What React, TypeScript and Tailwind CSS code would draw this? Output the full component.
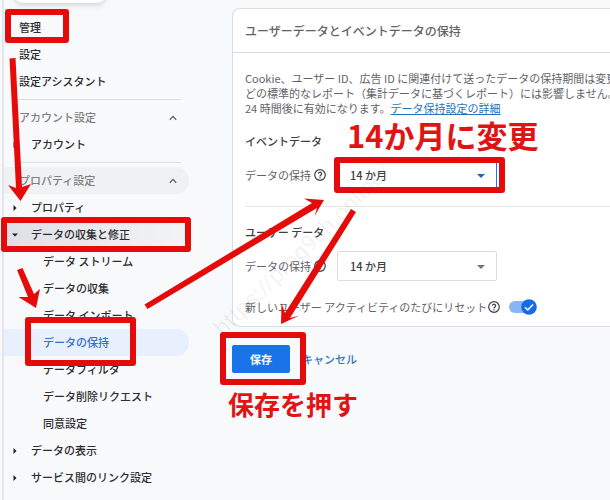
import type { ReactNode } from "react";

const LABEL = "flex h-[27px] items-center whitespace-nowrap";

function Chevron() {
  return (
    <svg className="h-2 w-2" viewBox="0 0 8 8" fill="none" stroke="#5f6368" strokeWidth="1.3" aria-hidden>
      <path d="M0.8 5.8 4 2.4l3.2 3.4" />
    </svg>
  );
}

function Caret({ open = false }: { open?: boolean }) {
  return (
    <svg className="h-2 w-2 shrink-0" viewBox="0 0 8 8" fill="#202124" aria-hidden>
      {open ? <path d="M1 2.5h6L4 5.5z" /> : <path d="M2.5 1v6L5.5 4z" />}
    </svg>
  );
}

function HelpIcon() {
  return (
    <svg className="h-3 w-3 shrink-0" viewBox="0 0 12 12" fill="none" stroke="#3c4043" strokeWidth="1.2" aria-hidden>
      <circle cx="6" cy="6" r="5.3" />
      <path d="M4.4 4.8a1.6 1.6 0 1 1 2.5 1.3c-.6.4-.9.7-.9 1.3" />
      <path d="M6 8.2v1.2" />
    </svg>
  );
}

function SectionHeading({ children, active = false }: { children: ReactNode; active?: boolean }) {
  return (
    <button
      type="button"
      className={`${LABEL} w-full justify-between rounded-r-full pl-[15px] pr-3 text-[#7b7f84] ${
        active ? "bg-[#f0f1f2]" : ""
      }`}
    >
      {children}
      <Chevron />
    </button>
  );
}

function TreeItem({ children, open = false }: { children: ReactNode; open?: boolean }) {
  return (
    <a
      href="#"
      className={`${LABEL} gap-3 pl-[7px] ${open ? "bg-linear-to-r from-[#dfe0e5] to-[#f3f4f6]" : ""}`}
    >
      <Caret open={open} />
      {children}
    </a>
  );
}

const COLLECTION_ITEMS = [
  "データ ストリーム",
  "データの収集",
  "データ インポート",
  "データの保持",
  "データフィルタ",
  "データ削除リクエスト",
  "同意設定",
];

function Sidebar() {
  return (
    <aside className="w-[187px] shrink-0 border-l-2 border-[#e3e5ea] font-medium">
      <div className="h-[14px] overflow-hidden pl-2">
        <div className="-mt-5 h-[23px] w-24 rounded-full bg-white shadow-md" />
      </div>
      <nav>
        <a href="#" className={`${LABEL} pl-[15px]`}>管理</a>
        <a href="#" className={`${LABEL} pl-[15px]`}>設定</a>
        <a href="#" className={`${LABEL} pl-[15px]`}>設定アシスタント</a>
        <hr className="my-1 ml-3 mr-2 border-[#dcdee2]" />
        <SectionHeading>アカウント設定</SectionHeading>
        <TreeItem>アカウント</TreeItem>
        <hr className="my-1 ml-3 mr-2 border-[#dcdee2]" />
        <SectionHeading active>プロパティ設定</SectionHeading>
        <TreeItem>プロパティ</TreeItem>
        <TreeItem open>データの収集と修正</TreeItem>
        {COLLECTION_ITEMS.map((item) => (
          <a
            key={item}
            href="#"
            className={`${LABEL} rounded-r-full pl-[39px] ${
              item === "データの保持" ? "bg-[#e8f0fe] text-[#3572c6]" : ""
            }`}
          >
            {item}
          </a>
        ))}
        <TreeItem>データの表示</TreeItem>
        <TreeItem>サービス間のリンク設定</TreeItem>
      </nav>
    </aside>
  );
}

function RetentionRow({ id, focused = false }: { id: string; focused?: boolean }) {
  return (
    <div className="flex h-[30px] items-center">
      <label htmlFor={id} className="w-[69px] whitespace-nowrap">データの保持</label>
      <HelpIcon />
      <div className="relative ml-[11px]">
        <select
          id={id}
          className={`h-[30px] w-[160px] appearance-none rounded-xs border bg-white pl-3 font-medium text-[#3c4043] ${
            focused ? "border-[#1a73e8]" : "border-[#dadce0]"
          }`}
        >
          <option>14 か月</option>
        </select>
        <svg
          className={`pointer-events-none absolute right-3 top-3 h-2 w-2 ${
            focused ? "text-[#1967b5]" : "text-[#70757a]"
          }`}
          viewBox="0 0 8 8"
          fill="currentColor"
          aria-hidden
        >
          <path d="M0 2h8L4 6z" />
        </svg>
      </div>
    </div>
  );
}

function SettingsCard() {
  return (
    <section className="overflow-hidden rounded-l-lg border border-r-0 border-[#dadce0] bg-white">
      <h1 className="flex h-11 items-center whitespace-nowrap border-b border-[#dadce0] pl-3 text-[12px] font-medium">
        ユーザーデータとイベントデータの保持
      </h1>
      <div className="pb-1 pl-3 pt-[18px]">
        <p className="whitespace-nowrap leading-[15px]">
          Cookie、ユーザー ID、広告 ID に関連付けて送ったデータの保持期間は変更で
          <br />
          どの標準的なレポート（集計データに基づくレポート）には影響しません。
          <br />
          24 時間後に有効になります。
          <a href="#" className="text-[#2374bb] underline">データ保持設定の詳細</a>
        </p>
        <h2 className="mt-[18px] leading-[15px] font-medium text-[#3c4043]">イベントデータ</h2>
        <div className="mt-[11px]">
          <RetentionRow id="event-retention" focused />
        </div>
        <hr className="mt-4 border-[#e4e5e8]" />
        <h2 className="mt-[18px] leading-[15px] font-medium text-[#3c4043]">ユーザー データ</h2>
        <div className="mt-[11px]">
          <RetentionRow id="user-retention" />
        </div>
        <div className="mt-[11px] flex h-[30px] items-center">
          <label htmlFor="reset" className="w-[243px] whitespace-nowrap">
            新しいユーザー アクティビティのたびにリセット
          </label>
          <HelpIcon />
          <span className="relative ml-[9px] flex h-4 w-7 items-center">
            <input
              id="reset"
              type="checkbox"
              role="switch"
              defaultChecked
              className="h-3 w-6 appearance-none rounded-full bg-[#8ab4f8]"
            />
            <svg className="pointer-events-none absolute right-0 top-0 h-4 w-4" viewBox="0 0 16 16" aria-hidden>
              <circle cx="8" cy="8" r="7.8" fill="#1a6ae8" />
              <path d="M4 8.2 6.8 11 12 5.4" fill="none" stroke="#fff" strokeWidth="1.5" />
            </svg>
          </span>
        </div>
      </div>
    </section>
  );
}

function Annotations() {
  return (
    <div className="pointer-events-none absolute inset-0 overflow-hidden">
      <p className="absolute left-[178px] top-[235px] w-[250px] -rotate-44 whitespace-nowrap text-center font-[Roboto,sans-serif] text-[23px] leading-[30px] text-black/6">
        https://prog9ch.online/
      </p>
      <div className="absolute left-[5px] top-[9px] h-[34px] w-[64px] rounded-[3px] border-6 border-[#e60b0b]" />
      <div className="absolute left-[1px] top-[217px] h-[35px] w-[190px] rounded-[3px] border-6 border-[#e60b0b]" />
      <div className="absolute left-[25px] top-[317px] h-[49px] w-[111px] rounded-[3px] border-6 border-[#e60b0b]" />
      <div className="absolute left-[334px] top-[157px] h-[36px] w-[171px] rounded-[3px] border-6 border-[#e60b0b]" />
      <div className="absolute left-[220px] top-[332px] h-[53px] w-[86px] rounded-[3px] border-6 border-[#e60b0b]" />
      <svg className="absolute left-0 top-0" width="610" height="500" fill="#e60b0b" aria-hidden>
        <path d="M9.5 58.5 15.500 58 22 187 31 184 20.500 201 8 185 16 188z" />
        <path d="M17 270 22.500 268 34 294 40 289 36 308 18.500 297 28 297z" />
        <path d="M144.500 304.500 147.500 309 317 208 314.500 216 324 200 304 198.500 312 203z" />
        <path d="M351 209 356 212 290 318 299.500 315.500 281 324 281.500 303 285 313z" />
      </svg>
      <p className="absolute left-[347px] top-[115px] whitespace-nowrap text-[31px] leading-10 font-bold text-[#e01414]">
        14か月に変更
      </p>
      <p className="absolute left-[228px] top-[386px] whitespace-nowrap text-[26px] leading-9 font-bold text-[#e01414]">
        保存を押す
      </p>
    </div>
  );
}

export default function App() {
  return (
    <div className="relative flex min-h-screen overflow-hidden bg-[#f8f9fb] pl-[2px] font-['Noto_Sans_CJK_JP',sans-serif] text-[11px] text-[#2c2d30]">
      <Sidebar />
      <main className="min-w-0 flex-1 pl-[43px] pt-2 text-[#5f6368]">
        <SettingsCard />
        <div className="mt-[18px] flex items-center gap-3">
          <button type="button" className="h-7 w-[58px] rounded-xs bg-[#1a73e8] font-bold text-white">
            保存
          </button>
          <button type="button" className="font-medium text-[#3572c6]">
            キャンセル
          </button>
        </div>
      </main>
      <Annotations />
    </div>
  );
}
